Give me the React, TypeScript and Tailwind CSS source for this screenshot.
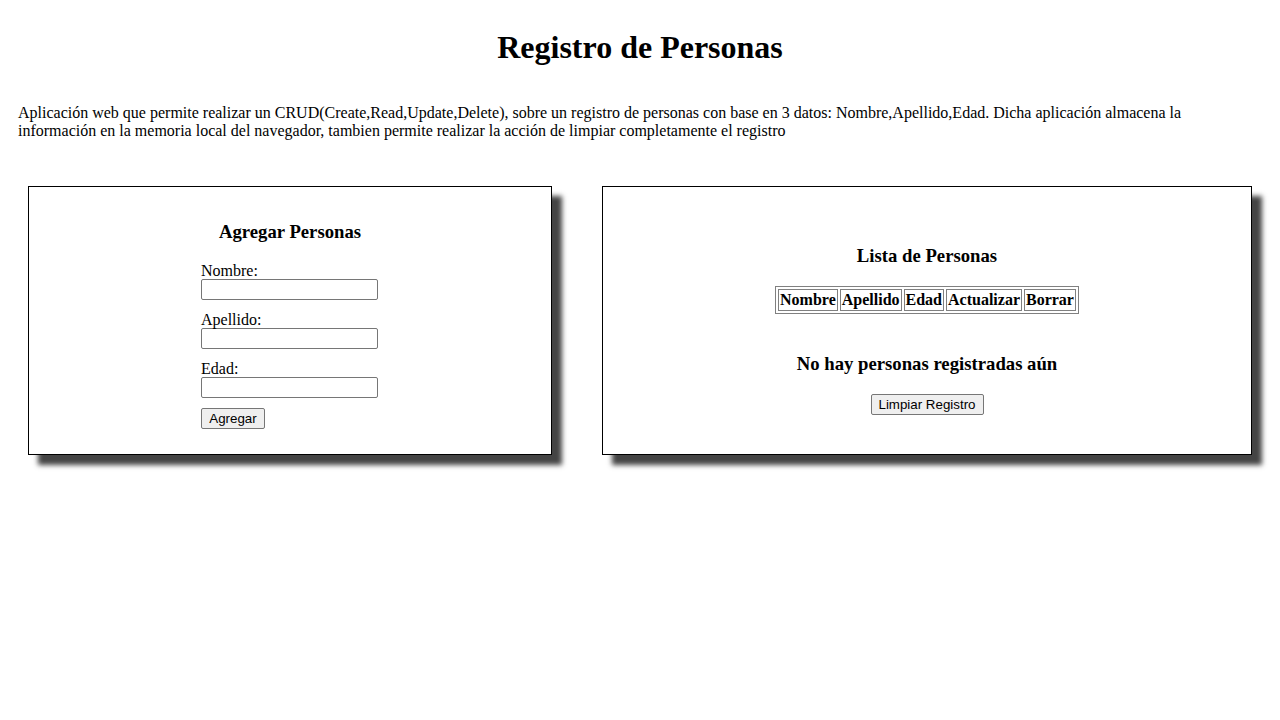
import React from "react";

const serif = "font-['Liberation_Serif','Times_New_Roman',serif]";
const sans = "font-['Liberation_Sans',Arial,sans-serif]";

function Field({ label }: { label: string }) {
  return (
    <div className="mb-[10px]">
      <label className="block h-[18px] leading-[20px] text-base">{label}</label>
      <input
        type="text"
        className={`block w-[177px] h-[21px] border border-[#767676] rounded-[2px] bg-white px-[2px] text-[13.33px] ${sans}`}
      />
    </div>
  );
}

function Btn({ children, className = "" }: { children: React.ReactNode; className?: string }) {
  return (
    <button
      className={`block h-[21px] px-[6px] border border-[#767676] rounded-[2px] bg-[#efefef] text-[13.33px] leading-[15px] text-black text-center ${sans} ${className}`}
    >
      {children}
    </button>
  );
}

export default function App() {
  const headers = ["Nombre", "Apellido", "Edad", "Actualizar", "Borrar"];
  return (
    <div className={`min-h-screen bg-white text-black ${serif}`}>
      <div className="p-2 flex flex-col">
        <h1 className="text-[32px] font-bold text-center my-[21.44px] leading-[36.8px]">
          Registro de Personas
        </h1>
        <p className="mt-4 ml-[10px] mr-[20px] text-base leading-[18.4px]">
          Aplicación web que permite realizar un CRUD(Create,Read,Update,Delete), sobre un registro de personas con base en 3 datos: Nombre,Apellido,Edad. Dicha aplicación almacena la información en la memoria local del navegador, tambien permite realizar la acción de limpiar completamente el registro
        </p>
        <div className="mt-[45.5px] ml-5 flex items-stretch gap-[50px]">
          <div className="w-[524px] border border-black bg-white shadow-[10px_10px_5px_#444] pt-[34px] pb-[25px]">
            <h3 className="text-[18.72px] font-bold text-center leading-[22px]">Agregar Personas</h3>
            <form className="w-[177px] ml-[172px] mt-[18px]" onSubmit={(e) => e.preventDefault()}>
              <Field label="Nombre:" />
              <Field label="Apellido:" />
              <Field label="Edad:" />
              <Btn className="w-[64px]">Agregar</Btn>
            </form>
          </div>
          <div className="w-[650px] border border-black bg-white shadow-[10px_10px_5px_#444] pt-[58px] pb-[39px] flex flex-col items-center">
            <h3 className="text-[18.72px] font-bold text-center leading-[22px]">Lista de Personas</h3>
            <table className="mt-[19px] border border-[#808080] border-separate border-spacing-[2px]">
              <thead>
                <tr>
                  {headers.map((h) => (
                    <th key={h} className="border border-[#808080] p-[1px] text-base font-bold leading-[18px]">
                      {h}
                    </th>
                  ))}
                </tr>
              </thead>
            </table>
            <h3 className="mt-[39px] text-[18.72px] font-bold text-center leading-[22px]">
              No hay personas registradas aún
            </h3>
            <div className="mt-[19px]">
              <Btn className="w-[113px]">Limpiar Registro</Btn>
            </div>
          </div>
        </div>
      </div>
    </div>
  );
}
